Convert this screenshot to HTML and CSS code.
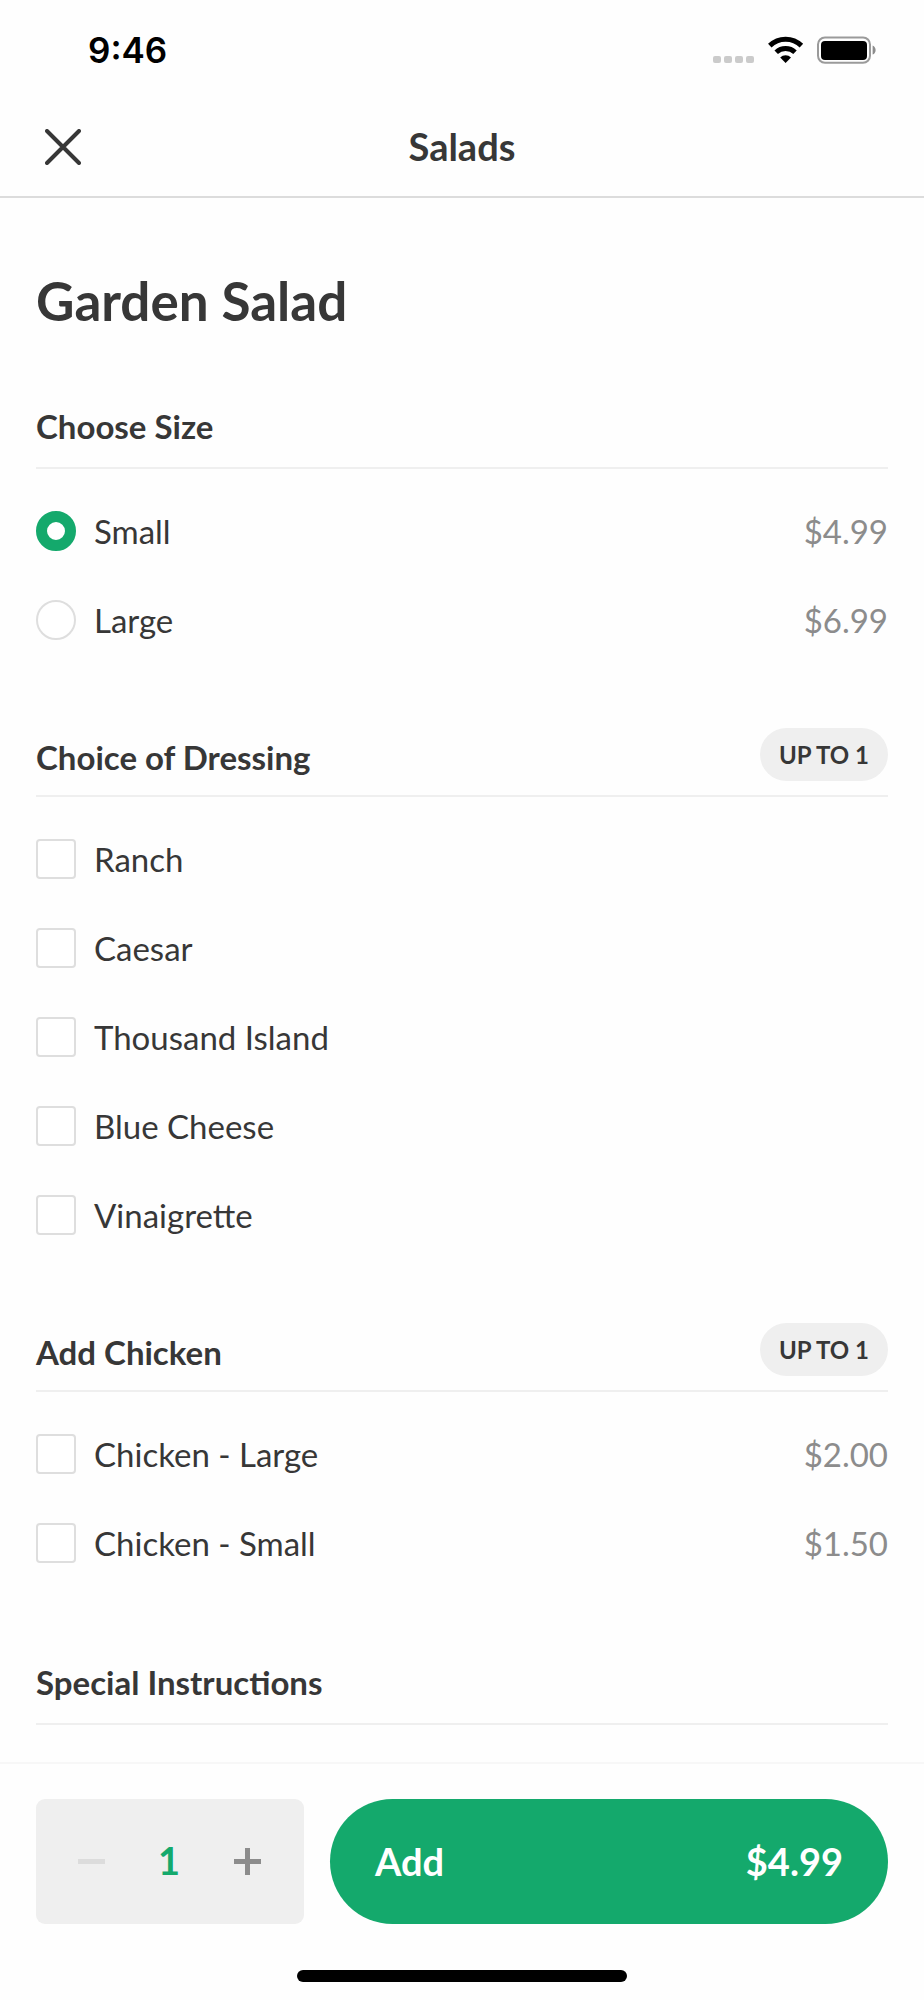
FILE: index.html
```html
<!DOCTYPE html>
<html lang="en">
<head>
<meta charset="utf-8">
<meta name="viewport" content="width=device-width, initial-scale=1">
<title>Garden Salad</title>
<link rel="stylesheet" href="styles.css">
</head>
<body>
<div class="app">
  <header class="top">
    <div class="status">
      <span class="status__time">9:46</span>
      <div class="status__icons">
        <svg width="42" height="28" viewBox="0 0 42 28" fill="#cbcbcb" aria-hidden="true">
          <rect x="0" y="20" width="8" height="7" rx="2"/><rect x="11" y="20" width="8" height="7" rx="2"/><rect x="22" y="20" width="8" height="7" rx="2"/><rect x="33" y="20" width="8" height="7" rx="2"/>
        </svg>
        <svg width="36" height="28" viewBox="0 0 36 28" aria-hidden="true">
          <path d="M1.8 9.6a22.6 22.6 0 0 1 31.6 0M8.2 16.2a13.6 13.6 0 0 1 18.8 0" fill="none" stroke="#000" stroke-width="5"/>
          <path d="M12.2 21.4a8 8 0 0 1 10.8 0L17.6 27z"/>
        </svg>
        <svg width="60" height="28" viewBox="0 0 60 28" aria-hidden="true">
          <rect x="1" y="1.4" width="52" height="25.4" rx="7" fill="none" stroke="#9a9a9a" stroke-width="2"/>
          <rect x="4" y="5" width="46" height="19" rx="4"/>
          <path d="M55.6 9.4c4 1.6 4 7.6 0 9.2z" fill="#8c8c8c"/>
        </svg>
      </div>
    </div>
    <div class="nav">
      <button class="nav__close" type="button" aria-label="Close">
        <svg width="36" height="36" viewBox="0 0 36 36" fill="none" stroke="#373737" stroke-width="4" stroke-linecap="round"><path d="M2 2l32 32M34 2L2 34"/></svg>
      </button>
      <span class="nav__title">Salads</span>
    </div>
  </header>

  <main class="content">
    <h1 class="title">Garden Salad</h1>

    <section class="group" role="radiogroup" aria-labelledby="size">
      <div class="head head--plain"><h2 class="head__title" id="size">Choose Size</h2></div>
      <div class="options">
        <label class="option"><input class="mark mark--radio" type="radio" name="size" checked><span class="option__name">Small</span><span class="option__price">$4.99</span></label>
        <label class="option"><input class="mark mark--radio" type="radio" name="size"><span class="option__name">Large</span><span class="option__price">$6.99</span></label>
      </div>
    </section>

    <section class="group" role="group" aria-labelledby="dressing">
      <div class="head"><h2 class="head__title" id="dressing">Choice of Dressing</h2><span class="badge">UP TO 1</span></div>
      <div class="options">
        <label class="option"><input class="mark" type="checkbox"><span class="option__name">Ranch</span></label>
        <label class="option"><input class="mark" type="checkbox"><span class="option__name">Caesar</span></label>
        <label class="option"><input class="mark" type="checkbox"><span class="option__name">Thousand Island</span></label>
        <label class="option"><input class="mark" type="checkbox"><span class="option__name">Blue Cheese</span></label>
        <label class="option"><input class="mark" type="checkbox"><span class="option__name">Vinaigrette</span></label>
      </div>
    </section>

    <section class="group" role="group" aria-labelledby="chicken">
      <div class="head"><h2 class="head__title" id="chicken">Add Chicken</h2><span class="badge">UP TO 1</span></div>
      <div class="options">
        <label class="option"><input class="mark" type="checkbox"><span class="option__name">Chicken - Large</span><span class="option__price">$2.00</span></label>
        <label class="option"><input class="mark" type="checkbox"><span class="option__name">Chicken - Small</span><span class="option__price">$1.50</span></label>
      </div>
    </section>

    <section class="group">
      <div class="head head--plain"><h2 class="head__title">Special Instructions</h2></div>
    </section>
  </main>

  <footer class="bottom">
    <div class="actions">
      <div class="stepper">
        <button class="stepper__button" type="button" aria-label="Decrease quantity" disabled>
          <svg width="27" height="27" viewBox="0 0 27 27" fill="currentColor"><path d="M0 11h27v5H0z"/></svg>
        </button>
        <output class="stepper__value">1</output>
        <button class="stepper__button" type="button" aria-label="Increase quantity">
          <svg width="27" height="27" viewBox="0 0 27 27" fill="currentColor"><path d="M0 11h27v5H0z"/><path d="M11 0h5v27h-5z"/></svg>
        </button>
      </div>
      <button class="add" type="button"><span>Add</span><span>$4.99</span></button>
    </div>
    <div class="home"></div>
  </footer>
</div>
</body>
</html>
```
FILE: styles.css
```css
* {
  box-sizing: border-box;
}

body {
  margin: 0;
  background: #fefefe;
  color: #373737;
  font-family: Lato, "Open Sans", sans-serif;
}

button {
  border: 0;
  padding: 0;
  background: none;
  font: inherit;
  color: inherit;
  cursor: pointer;
}

svg {
  display: block;
}

.app {
  display: flex;
  flex-direction: column;
  min-height: 100vh;
}

.top {
  border-bottom: 2px solid #dcdcdc;
}

.status {
  display: flex;
  align-items: center;
  justify-content: space-between;
  height: 100px;
  padding: 0 47px 0 88px;
}

.status__time {
  color: #000;
  font: 600 35px/40px Inter, sans-serif;
}

.status__icons {
  display: flex;
  gap: 13px;
}

.nav {
  display: grid;
  grid-template-columns: 1fr auto 1fr;
  align-items: center;
  height: 96px;
  padding: 0 45px 2px;
}

.nav__close {
  justify-self: start;
}

.nav__title {
  padding-bottom: 2px;
  font-size: 38px;
  font-weight: 700;
  line-height: 48px;
}

.content {
  flex: 1;
  padding: 72px 36px 37px;
}

.title {
  margin: 0;
  font-size: 53px;
  font-weight: 700;
  line-height: 62px;
}

.group {
  margin-top: 63px;
}

.head {
  display: flex;
  align-items: flex-end;
  justify-content: space-between;
  padding-bottom: 14px;
  border-bottom: 2px solid #efefef;
}

.head--plain {
  padding: 7px 0 17px;
}

.head__title {
  margin: 0;
  font-size: 33px;
  font-weight: 700;
  line-height: 48px;
}

.badge {
  padding: 0 19px;
  border-radius: 27px;
  background: #efefef;
  font-size: 24px;
  font-weight: 700;
  line-height: 53px;
}

.options {
  padding: 17px 0 1px;
}

.option {
  display: flex;
  align-items: center;
  gap: 18px;
  height: 89px;
  font-size: 33px;
  line-height: 40px;
}

.option__price {
  margin-left: auto;
  color: #8c8c8c;
}

.mark {
  appearance: none;
  flex: none;
  width: 40px;
  height: 40px;
  margin: 0;
  border: 2px solid #dedede;
  border-radius: 4px;
  background: #fff;
}

.mark--radio {
  border-radius: 50%;
}

.mark:checked {
  border-color: #14a96c;
  background: #14a96c;
}

.mark--radio:checked {
  border-width: 11px;
  background: #fff;
}

.bottom {
  position: sticky;
  bottom: 0;
  padding: 35px 36px 18px;
  border-top: 2px solid #f7f7f7;
  background: #fefefe;
}

.actions {
  display: flex;
  gap: 26px;
  height: 125px;
}

.stepper {
  display: grid;
  grid-template-columns: repeat(3, 1fr);
  align-items: center;
  justify-items: center;
  width: 268px;
  padding: 0 18px 0 16px;
  border-radius: 9px;
  background: #efefef;
}

.stepper__button {
  padding: 20px;
  color: #8c8c8c;
}

.stepper__button:disabled {
  color: #dcdcdc;
}

.stepper__value {
  padding-bottom: 4px;
  color: #14a96c;
  font-size: 38px;
  font-weight: 700;
  line-height: 48px;
}

.add {
  display: flex;
  flex: 1;
  align-items: center;
  justify-content: space-between;
  padding: 0 45px 2px;
  border-radius: 63px;
  background: #14a96c;
  color: #fff;
  font-size: 38px;
  font-weight: 700;
  line-height: 48px;
}

.home {
  width: 330px;
  height: 12px;
  margin: 46px auto 0;
  border-radius: 6px;
  background: #000;
}
```
